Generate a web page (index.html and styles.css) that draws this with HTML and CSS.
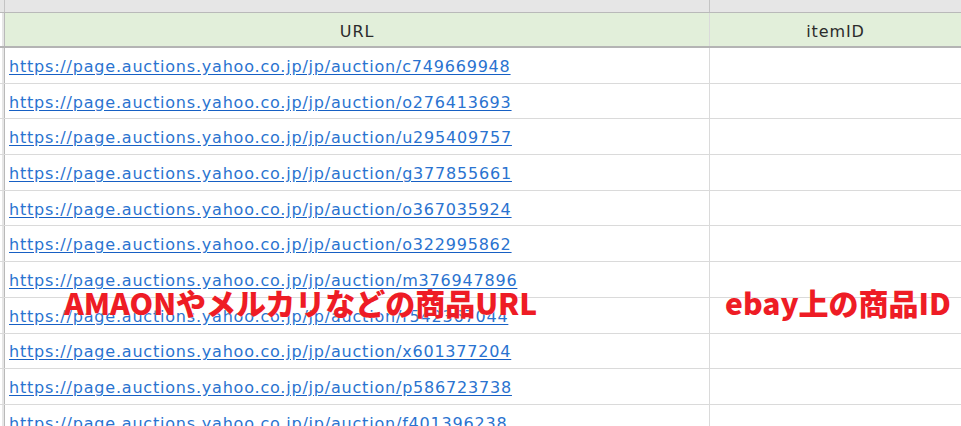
FILE: index.html
```html
<!DOCTYPE html>
<html>
<head>
  <title>URL / itemID</title>
  <link rel="stylesheet" href="styles.css">
</head>
<body>
  <div class="sheet">
    <div class="col-letters">
      <div class="corner"></div>
      <div class="letter url-col"></div>
      <div class="letter id-col"></div>
    </div>

    <div class="row head">
      <div class="rowhead"></div>
      <div class="cell url-col">URL</div>
      <div class="cell id-col">itemID</div>
    </div>

    <div class="row"><div class="rowhead"></div><div class="cell url-col"><a href="#">https://page.auctions.yahoo.co.jp/jp/auction/c749669948</a></div><div class="cell id-col"></div></div>
    <div class="row"><div class="rowhead"></div><div class="cell url-col"><a href="#">https://page.auctions.yahoo.co.jp/jp/auction/o276413693</a></div><div class="cell id-col"></div></div>
    <div class="row"><div class="rowhead"></div><div class="cell url-col"><a href="#">https://page.auctions.yahoo.co.jp/jp/auction/u295409757</a></div><div class="cell id-col"></div></div>
    <div class="row"><div class="rowhead"></div><div class="cell url-col"><a href="#">https://page.auctions.yahoo.co.jp/jp/auction/g377855661</a></div><div class="cell id-col"></div></div>
    <div class="row"><div class="rowhead"></div><div class="cell url-col"><a href="#">https://page.auctions.yahoo.co.jp/jp/auction/o367035924</a></div><div class="cell id-col"></div></div>
    <div class="row"><div class="rowhead"></div><div class="cell url-col"><a href="#">https://page.auctions.yahoo.co.jp/jp/auction/o322995862</a></div><div class="cell id-col"></div></div>
    <div class="row"><div class="rowhead"></div><div class="cell url-col"><a href="#">https://page.auctions.yahoo.co.jp/jp/auction/m376947896</a></div><div class="cell id-col"></div></div>
    <div class="row"><div class="rowhead"></div><div class="cell url-col"><a href="#">https://page.auctions.yahoo.co.jp/jp/auction/r542367044</a></div><div class="cell id-col"></div></div>
    <div class="row"><div class="rowhead"></div><div class="cell url-col"><a href="#">https://page.auctions.yahoo.co.jp/jp/auction/x601377204</a></div><div class="cell id-col"></div></div>
    <div class="row"><div class="rowhead"></div><div class="cell url-col"><a href="#">https://page.auctions.yahoo.co.jp/jp/auction/p586723738</a></div><div class="cell id-col"></div></div>
    <div class="row"><div class="rowhead"></div><div class="cell url-col"><a href="#">https://page.auctions.yahoo.co.jp/jp/auction/f401396238</a></div><div class="cell id-col"></div></div>

    <div class="note note-url">AMAONやメルカリなどの商品URL</div>
    <div class="note note-id">ebay上の商品ID</div>
  </div>
</body>
</html>
```

FILE: styles.css
```css
body {
  margin: 0;
  padding: 0;
  background: #fff;
  overflow: hidden;
}

.sheet {
  position: relative;
  width: 961px;
  height: 426px;
  overflow: hidden;
  font-family: "DejaVu Sans", "Noto Sans CJK JP", sans-serif;
}

.col-letters,
.row {
  display: grid;
  grid-template-columns: 5px 705px 1fr;
}

.col-letters {
  height: 12px;
  background: #e6e6e6;
  border-bottom: 1px solid #b9b9b9;
}

.corner {
  background: #e6e6e6;
  border-right: 1px solid #c4c4c4;
}

.letter.url-col {
  border-right: 1px solid #c4c4c4;
}

.row {
  height: 34.7px;
  border-bottom: 1px solid #dadada;
}

.row.head {
  background: #e2efda;
  border-bottom: 2px solid #b4b4b4;
  height: 33px;
}

.rowhead {
  background: #e6e6e6;
  border-left: 2px solid #fff;
  border-right: 1px solid #b9b9b9;
}

.cell {
  display: flex;
  align-items: center;
  padding: 3px 0 0 4px;
  font-size: 15px;
  color: #333;
  white-space: nowrap;
}

.cell.url-col {
  border-right: 1px solid #dadada;
}

.head .cell {
  justify-content: center;
  padding: 4px 0 0 0;
  font-size: 16px;
  letter-spacing: 0.9px;
  color: #2b2b2b;
}

.cell a {
  color: #2a73d0;
  text-decoration: underline;
  text-decoration-color: #1760c4;
  text-underline-offset: 2px;
  font-size: 16px;
  letter-spacing: 0.8px;
  line-height: 20px;
}

.note {
  position: absolute;
  color: #ee1c25;
  font-family: "Noto Sans CJK JP", sans-serif;
  font-weight: 900;
  font-size: 30px;
  line-height: 36px;
  white-space: nowrap;
  text-shadow: 0 0 1px #fff;
}

.note-url {
  left: 64px;
  top: 284px;
}

.note-id {
  left: 725px;
  top: 284px;
}
```
